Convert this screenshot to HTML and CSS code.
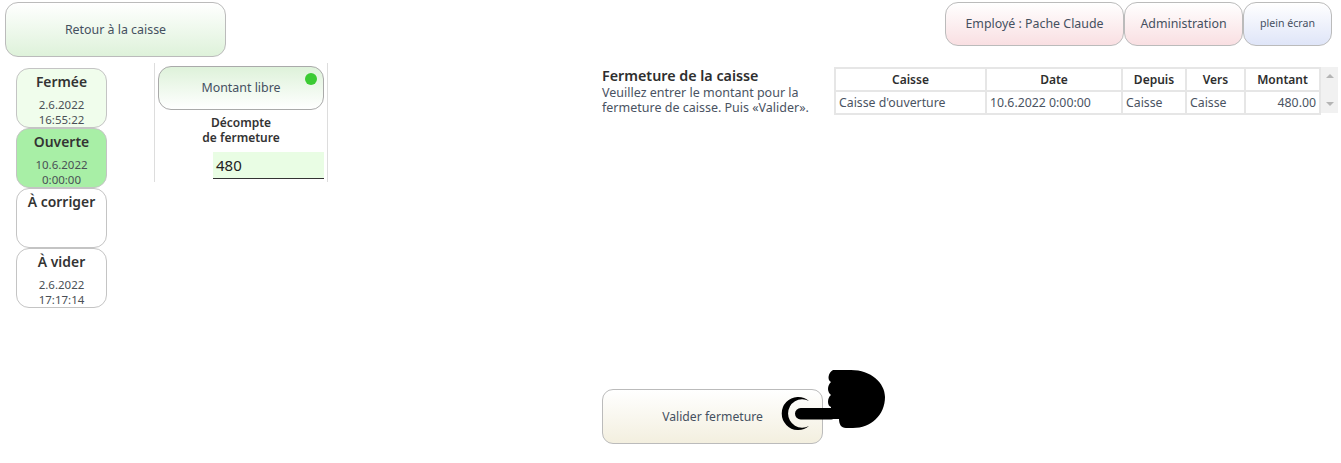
FILE: index.html
```html
<!DOCTYPE html>
<html>
<head>
    <meta charset="utf-8" />
    <title>Fermeture de la caisse</title>
    <link rel="stylesheet" href="styles.css">
</head>
<body>
    <div class="topbar">
        <div class="btn btn-green btn-back">Retour à la caisse</div>
        <div class="top-right">
            <div class="btn btn-pink btn-employee">Employé : Pache Claude</div>
            <div class="btn btn-pink btn-admin">Administration</div>
            <div class="btn btn-blue btn-full">plein écran</div>
        </div>
    </div>
    <div class="main">
        <div class="states">
            <div class="state state-closed"><div class="state-name">Fermée</div><div class="state-date">2.6.2022<br>16:55:22</div></div>
            <div class="state state-open"><div class="state-name">Ouverte</div><div class="state-date">10.6.2022<br>0:00:00</div></div>
            <div class="state"><div class="state-name">À corriger</div></div>
            <div class="state"><div class="state-name">À vider</div><div class="state-date">2.6.2022<br>17:17:14</div></div>
        </div>
        <div class="count">
            <div class="btn btn-free">Montant libre<span class="dot"></span></div>
            <div class="count-title">Décompte<br>de fermeture</div>
            <div class="count-input">480</div>
        </div>
        <div class="center">
            <div class="info">
                <div class="info-title">Fermeture de la caisse</div>
                <div class="info-text">Veuillez entrer le montant pour la<br>fermeture de caisse. Puis «Valider».</div>
            </div>
            <div class="btn btn-validate">Valider fermeture
                <svg class="hand" width="106" height="62" viewBox="0 0 106 62">
                    <path d="M28 31A16.500 16.500 0 1 0 28 56A14.200 14.200 0 1 1 28 31Z" fill="#000"/>
                    <rect x="14" y="38" width="42" height="11.500" rx="5.700" fill="#000"/>
                    <path d="M52 0H70C90 0 104 13 104 27C104 45 90 58 72 58H65C60 58 58 54 58 49H50V37C46 36 46 28 50 25C46 22 46 16 50 12C46 10 47 3 52 0Z" fill="#000"/>
                </svg>
            </div>
        </div>
        <div class="side">
            <div class="table-wrap">
                <table class="list">
                    <tr><th class="col-cash">Caisse</th><th class="col-date">Date</th><th class="col-from">Depuis</th><th class="col-to">Vers</th><th class="col-amount">Montant</th></tr>
                    <tr><td>Caisse d'ouverture</td><td>10.6.2022 0:00:00</td><td>Caisse</td><td>Caisse</td><td class="num">480.00</td></tr>
                </table>
                <div class="scroll"><span class="arrow-up"></span><span class="arrow-down"></span></div>
            </div>
        </div>
    </div>
</body>
</html>
```

FILE: styles.css
```css
html, body {
    margin: 0;
    background-color: #fff;
    font-family: "Noto Sans", Arial, sans-serif;
    color: #333;
}

body {
    width: 1341px;
    height: 463px;
    overflow: hidden;
}

.btn {
    display: flex;
    align-items: center;
    justify-content: center;
    box-sizing: border-box;
    padding-bottom: 2px;
    border: 1px solid #bbb;
    border-radius: 13px;
    font-size: 12.400px;
    color: #45505f;
}

.btn-green {
    background: linear-gradient(#fff, #def2da);
}

.btn-pink {
    background: linear-gradient(#fff, #f9dfe2);
}

.btn-blue {
    background: linear-gradient(#fff, #dfe5f8);
}

.topbar {
    display: flex;
    justify-content: space-between;
    padding: 2px 9px 0 5px;
    height: 61px;
    box-sizing: border-box;
}

.top-right {
    display: flex;
    align-items: flex-start;
}

.btn-back {
    width: 221px;
    height: 55px;
    padding-bottom: 0;
}

.btn-employee {
    width: 179px;
    height: 44px;
}

.btn-admin {
    width: 119px;
    height: 44px;
}

.btn-full {
    width: 89px;
    height: 44px;
    font-size: 10.600px;
}

.main {
    display: flex;
    align-items: flex-start;
    padding-left: 16px;
    padding-top: 2px;
}

.states {
    width: 91px;
    margin-top: 5px;
    margin-right: 47px;
}

.state {
    box-sizing: border-box;
    height: 60px;
    border: 1px solid #c4c4c4;
    border-radius: 13px;
    text-align: center;
    overflow: hidden;
    background-color: #fff;
}

.state-closed {
    background-color: #f0fdec;
}

.state-open {
    background-color: #a8efa6;
}

.state-name {
    font-size: 13.900px;
    font-weight: 600;
    line-height: 26px;
}

.state-date {
    margin-top: 2px;
    font-size: 11.500px;
    line-height: 15px;
    color: #4a4f55;
}

.count {
    box-sizing: border-box;
    width: 174px;
    height: 119px;
    padding: 3px 2px 0 3px;
    border-left: 1px solid #ddd;
    border-right: 1px solid #ddd;
}

.btn-free {
    position: relative;
    width: 166px;
    height: 44px;
    background: linear-gradient(#def2da, #fff);
    border-color: #aaa;
}

.dot {
    position: absolute;
    top: 6px;
    right: 6px;
    width: 12px;
    height: 12px;
    border-radius: 50%;
    background-color: #3ccb34;
}

.count-title {
    margin: 5px 0 0 -4px;
    width: 174px;
    text-align: center;
    font-size: 12px;
    font-weight: 600;
    line-height: 15px;
}

.count-input {
    box-sizing: border-box;
    width: 111px;
    height: 27px;
    margin: 7px 0 0 55px;
    padding-left: 3px;
    background-color: #e9fde4;
    border-bottom: 1px solid #333;
    font-size: 15px;
    line-height: 27px;
    color: #222;
}

.center {
    display: flex;
    flex-direction: column;
    width: 232px;
    height: 383px;
    margin-left: 274px;
}

.info {
    height: 326px;
    padding-top: 4px;
    box-sizing: border-box;
}

.info-title {
    font-size: 14.300px;
    font-weight: 600;
    line-height: 18px;
    color: #2e2e2e;
}

.info-text {
    font-size: 12.500px;
    line-height: 15px;
    color: #4a5362;
}

.btn-validate {
    position: relative;
    width: 221px;
    height: 55px;
    padding-bottom: 0;
    background: linear-gradient(#fff, #f3efdf);
    border-radius: 11px;
    font-size: 12.200px;
}

.hand {
    position: absolute;
    left: 178px;
    top: -20px;
}

.table-wrap {
    display: flex;
    margin-top: 4px;
}

.list {
    border-collapse: collapse;
    table-layout: fixed;
    width: 487px;
    font-size: 12.300px;
}

.list th, .list td {
    height: 21px;
    padding: 0 3px;
    border: 2px solid #e6e6e6;
    white-space: nowrap;
    overflow: hidden;
}

.list th {
    font-size: 12px;
    font-weight: 600;
    text-align: center;
    color: #2e2e2e;
}

.list td {
    color: #4a5362;
}

.list .num {
    text-align: right;
}

.col-cash {
    width: 143px;
}

.col-date {
    width: 128px;
}

.col-from {
    width: 56px;
}

.col-to {
    width: 51px;
}

.scroll {
    position: relative;
    width: 17px;
    height: 46px;
    background-color: #f1f1f1;
}

.arrow-up, .arrow-down {
    position: absolute;
    left: 5px;
    width: 0;
    height: 0;
    border-left: 4px solid transparent;
    border-right: 4px solid transparent;
}

.arrow-up {
    top: 7px;
    border-bottom: 4px solid #b5b5b5;
}

.arrow-down {
    bottom: 7px;
    border-top: 4px solid #b5b5b5;
}
```
